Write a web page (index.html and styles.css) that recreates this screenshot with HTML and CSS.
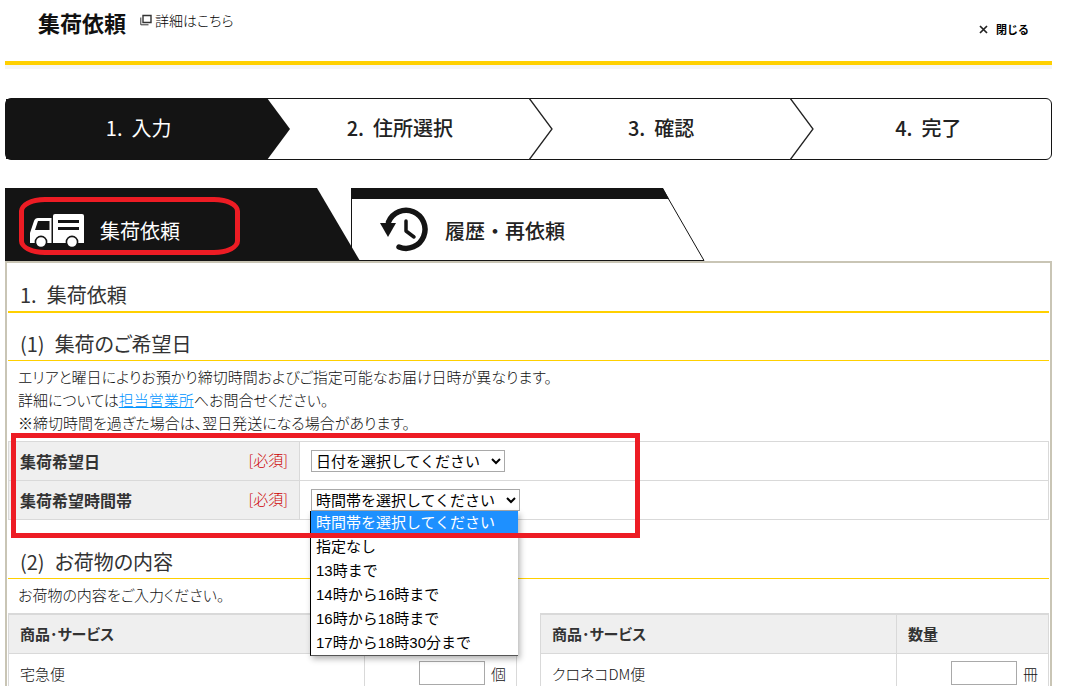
FILE: index.html
```html
<!DOCTYPE html>
<html lang="ja">
<head>
    <meta charset="UTF-8">
    <meta name="viewport" content="width=device-width, initial-scale=1.0">
    <title>集荷依頼</title>
    <link rel="stylesheet" href="styles.css">
</head>
<body>
    <div class="container">
        <header class="header">
            <h1>集荷依頼</h1>
            <a href="#" class="detail">
                <svg width="12" height="12" viewBox="0 0 12 12" fill="none" stroke="#333">
                    <path d="M3 1.5H11V8.5H3Z" stroke-width="1.4"/>
                    <path d="M0.8 3.5V10.8H8.5"/>
                </svg>
                詳細はこちら
            </a>
            <a href="#" class="close">
                <svg width="9" height="9" viewBox="0 0 9 9" stroke="#222" stroke-width="1.7">
                    <path d="M1 1L8 8M8 1L1 8"/>
                </svg>
                閉じる
            </a>
        </header>

        <ol class="steps">
            <li class="current">
                <span>1.</span>入力
                <svg class="arrow" width="25" height="62" viewBox="0 0 25 62"><path d="M0 0H1L24 31L1 62H0Z" fill="#141414"/></svg>
            </li>
            <li>
                <span>2.</span>住所選択
                <svg class="arrow" width="25" height="62" viewBox="0 0 25 62"><path d="M1 0L24 31L1 62" fill="none" stroke="#222" stroke-width="1.3"/></svg>
            </li>
            <li>
                <span>3.</span>確認
                <svg class="arrow" width="25" height="62" viewBox="0 0 25 62"><path d="M1 0L24 31L1 62" fill="none" stroke="#222" stroke-width="1.3"/></svg>
            </li>
            <li><span>4.</span>完了</li>
        </ol>

        <nav class="tabs">
            <a href="#" class="tab tab-active">
                <svg class="tab-bg" width="355" height="73" viewBox="0 0 355 73"><path d="M0 0H312L355 73H0Z" fill="#141414"/></svg>
                <svg class="tab-icon" width="56" height="36" viewBox="0 0 56 36">
                    <path d="M23 4Q23 2 25 2H52Q54 2 54 4V31H23Z" fill="#fff"/>
                    <path d="M21.5 6V31H0V21L4 9Q5 6 8 6Z" fill="#fff"/>
                    <path d="M8 9H19.5V18H5Z" fill="#141414"/>
                    <path d="M28 8H49V11H28ZM28 15H49V18H28Z" fill="#141414"/>
                    <circle cx="11" cy="30" r="5.6" fill="#fff" stroke="#141414" stroke-width="1.6"/>
                    <circle cx="42" cy="30" r="5.6" fill="#fff" stroke="#141414" stroke-width="1.6"/>
                </svg>
                集荷依頼
                <span class="mark-round"></span>
            </a>
            <a href="#" class="tab tab-history">
                <svg class="tab-bg" width="355" height="73" viewBox="0 0 355 73">
                    <path d="M0.5 0.5H311.5L353 72.5H0.5Z" fill="#fff" stroke="#141414"/>
                    <path d="M0 0H312L318 11H0Z" fill="#141414"/>
                </svg>
                <svg class="tab-icon" width="50" height="46" viewBox="0 0 50 46" fill="none" stroke="#141414">
                    <path d="M8.5 15A19 19 0 1 1 19 40" stroke-width="5.5" stroke-linecap="round"/>
                    <path d="M0 16H16L8 30Z" fill="#141414" stroke="none"/>
                    <path d="M26 14V24L34 30" stroke-width="3.5" stroke-linecap="round" stroke-linejoin="round"/>
                </svg>
                履歴・再依頼
            </a>
        </nav>

        <main class="panel">
            <h2><span>1.</span>集荷依頼</h2>

            <h3><span>(1)</span>集荷のご希望日</h3>
            <p>エリアと曜日によりお預かり締切時間およびご指定可能なお届け日時が異なります。<br>
            詳細については<a href="#">担当営業所</a>へお問合せください。<br>
            ※締切時間を過ぎた場合は、翌日発送になる場合があります。</p>

            <div class="pickup">
                <table class="form-table">
                    <tr>
                        <th><label for="pickupDate">集荷希望日</label><em>[必須]</em></th>
                        <td>
                            <select id="pickupDate">
                                <option>日付を選択してください</option>
                            </select>
                        </td>
                    </tr>
                    <tr>
                        <th><label for="pickupTime">集荷希望時間帯</label><em>[必須]</em></th>
                        <td>
                            <div class="select-wrap">
                                <select id="pickupTime">
                                    <option>時間帯を選択してください</option>
                                </select>
                                <ul class="options">
                                    <li class="selected">時間帯を選択してください</li>
                                    <li>指定なし</li>
                                    <li>13時まで</li>
                                    <li>14時から16時まで</li>
                                    <li>16時から18時まで</li>
                                    <li>17時から18時30分まで</li>
                                </ul>
                            </div>
                        </td>
                    </tr>
                </table>
                <div class="mark-box"></div>
            </div>

            <h3><span>(2)</span>お荷物の内容</h3>
            <p>お荷物の内容をご入力ください。</p>

            <div class="items">
                <table class="item-table">
                    <tr>
                        <th>商品･サービス</th>
                        <th class="qty"></th>
                    </tr>
                    <tr>
                        <td><label for="takkyubin">宅急便</label></td>
                        <td class="qty"><div><input type="text" id="takkyubin">個</div></td>
                    </tr>
                </table>
                <table class="item-table">
                    <tr>
                        <th>商品･サービス</th>
                        <th class="qty">数量</th>
                    </tr>
                    <tr>
                        <td><label for="dm">クロネコDM便</label></td>
                        <td class="qty"><div><input type="text" id="dm">冊</div></td>
                    </tr>
                </table>
            </div>
        </main>
    </div>
</body>
</html>
```
FILE: styles.css
```css
* {
    box-sizing: border-box;
}
body {
    font-family: "Noto Sans CJK JP", sans-serif;
    font-size: 15px;
    margin: 0;
    height: 100vh;
    overflow: hidden;
    background-color: #fff;
    color: #333;
}
.container {
    margin: 0 20px 0 5px;
}
h1, h2, h3, p, ol, ul {
    margin: 0;
    padding: 0;
}
ol, ul {
    list-style: none;
}

/* header */
.header {
    display: flex;
    align-items: flex-start;
    height: 65px;
    padding: 6px 23px 0 33px;
    border-bottom: 4px solid #ffd000;
    box-shadow: 0 4px 0 #f5f5f5;
}
h1 {
    font-size: 22px;
    line-height: 32px;
    color: #111;
}
.header a {
    display: flex;
    align-items: center;
    color: #000;
    text-decoration: none;
}
.detail {
    gap: 3px;
    margin-left: 14px;
    font-size: 14px;
    line-height: 28px;
    font-weight: 300;
    font-feature-settings: "palt";
}
.close {
    gap: 8px;
    margin-left: auto;
    font-size: 11px;
    line-height: 46px;
    font-weight: bold;
}

/* steps */
.steps {
    display: flex;
    height: 62px;
    margin-top: 33px;
    border: 1px solid #141414;
    border-radius: 6px;
}
.steps li {
    position: relative;
    display: flex;
    width: 25%;
    justify-content: center;
    align-items: center;
    padding: 0 0 4px 4px;
    font-size: 20px;
    font-weight: 500;
    color: #222;
}
.steps li:last-child {
    padding-left: 16px;
}
.steps span {
    margin-right: 9px;
}
.steps .current {
    background-color: #141414;
    color: #fff;
    font-weight: normal;
}
.arrow {
    position: absolute;
    top: -1px;
    right: -24px;
}

/* tabs */
.tabs {
    display: flex;
    margin-top: 28px;
}
.tab {
    position: relative;
    display: flex;
    align-items: center;
    width: 355px;
    height: 73px;
    padding-top: 11px;
    font-size: 20px;
    color: #222;
    text-decoration: none;
}
.tab-bg {
    position: absolute;
    top: 0;
    left: 0;
    z-index: -1;
}
.tab-active {
    z-index: 1;
    gap: 14px;
    padding-left: 25px;
    color: #fff;
}
.tab-history {
    z-index: 0;
    gap: 15px;
    margin-left: -9px;
    padding-left: 29px;
    font-weight: 500;
}
.mark-round {
    position: absolute;
    top: 9px;
    left: 14px;
    width: 221px;
    height: 58px;
    border: 5px solid #ed1c24;
    border-radius: 26px / 14px;
}

/* panel */
.panel {
    padding: 0 1px;
    border: 2px solid #c9c5b5;
}
h2, h3 {
    padding-left: 12px;
    font-size: 20px;
    font-weight: normal;
    font-feature-settings: "palt";
}
h2 {
    padding-top: 16px;
    line-height: 32px;
    border-bottom: 2px solid #ffd000;
}
h2 span {
    margin-right: 10px;
}
h3 {
    padding-top: 15px;
    line-height: 32px;
    border-bottom: 1px solid #ffd000;
}
h3 span {
    margin-right: 10px;
}
p {
    padding: 4px 10px 7px;
    line-height: 23px;
    font-weight: 300;
    font-feature-settings: "palt";
    color: #111;
}
p a {
    color: #0094ff;
}
table {
    border-collapse: collapse;
}
th {
    background-color: #efefef;
    text-align: left;
}
th, td {
    height: 39px;
    padding: 0 11px;
    border: 1px solid #d9d9d9;
}
.pickup {
    position: relative;
}
.form-table {
    width: 100%;
}
.form-table th {
    width: 291px;
    font-size: 16px;
}
.form-table em {
    float: right;
    font-size: 15px;
    font-weight: 300;
    font-style: normal;
    font-feature-settings: "palt";
    color: #c00;
}
select {
    display: block;
    height: 22px;
    padding: 0 6px 0 0;
    border: 1px solid #a9a9a9;
    border-radius: 0;
    background-color: #fff;
    color: #000;
    font-family: "Liberation Sans", "Noto Sans CJK JP", sans-serif;
    font-size: 15px;
}
.select-wrap {
    position: relative;
    width: fit-content;
}
.options {
    position: absolute;
    top: 22px;
    left: -1px;
    z-index: 1;
    width: 208px;
    border-left: 1px solid #000;
    border-bottom: 1px solid #555;
    background-color: #fff;
    box-shadow: 2px 3px 6px rgba(0, 0, 0, 0.3);
    color: #000;
    font-family: "Liberation Sans", "Noto Sans CJK JP", sans-serif;
}
.options li {
    height: 24px;
    padding-left: 5px;
    line-height: 24px;
    white-space: nowrap;
}
.options .selected {
    background-color: #1e90ff;
    color: #fff;
}
.mark-box {
    position: absolute;
    top: -8px;
    left: 3px;
    z-index: 2;
    width: 629px;
    height: 105px;
    border: 5px solid #ed1c24;
}

/* items */
.pickup + h3 {
    padding-top: 26px;
}
.items {
    display: flex;
    gap: 23px;
}
.item-table {
    flex: 1;
    border-top: 2px solid #d9d9d9;
    font-feature-settings: "palt";
}
.item-table td {
    height: 42px;
    padding-bottom: 2px;
    font-weight: 300;
    color: #111;
}
.item-table .qty {
    width: 152px;
    padding-right: 10px;
}
.qty div {
    display: flex;
    justify-content: flex-end;
    align-items: center;
    gap: 6px;
}
input {
    width: 66px;
    height: 24px;
    border: 1px solid #a9a9a9;
}
```
